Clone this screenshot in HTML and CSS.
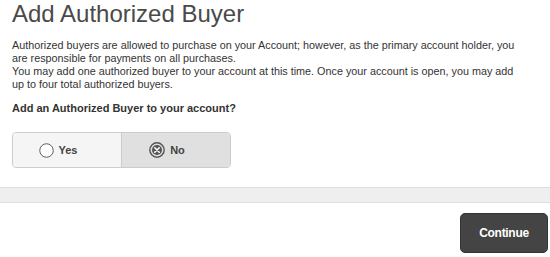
FILE: index.html
```html
<!DOCTYPE html>
<html lang="en">
<head>
    <meta charset="UTF-8">
    <meta name="viewport" content="width=device-width, initial-scale=1.0">
    <title>Add Authorized Buyer</title>
    <link rel="stylesheet" href="styles.css">
</head>
<body>
    <div class="content">
        <h1>Add Authorized Buyer</h1>
        <p class="intro">Authorized buyers are allowed to purchase on your Account; however, as the primary account holder, you are responsible for payments on all purchases.<br>
        You may add one authorized buyer to your account at this time. Once your account is open, you may add up to four total authorized buyers.</p>
        <p class="question">Add an Authorized Buyer to your account?</p>
        <div class="toggle">
            <label class="option">
                <svg width="15" height="15" viewBox="0 0 16 16">
                    <circle cx="8" cy="8" r="7.2" fill="#fff" stroke="#555" stroke-width="1"/>
                </svg>
                Yes
            </label>
            <label class="option selected">
                <svg width="16" height="16" viewBox="0 0 16 16">
                    <circle cx="8" cy="8" r="7.2" fill="#ddd" stroke="#555" stroke-width="1.4"/>
                    <circle cx="8" cy="8" r="5" fill="#555"/>
                    <path d="M5.8 5.8 L10.2 10.2 M10.2 5.8 L5.8 10.2" stroke="#fff" stroke-width="1.6" stroke-linecap="round"/>
                </svg>
                No
            </label>
        </div>
    </div>
    <div class="band"></div>
    <div class="actions">
        <button class="continue">Continue</button>
    </div>
</body>
</html>
```

FILE: styles.css
```css
body {
    font-family: "Liberation Sans", Arial, sans-serif;
    margin: 0;
    padding: 0;
    background: #fff;
    color: #333;
}
.content {
    padding: 0 12px;
}
h1 {
    font-size: 24px;
    font-weight: normal;
    color: #4a4a4a;
    margin: 0;
    line-height: 28px;
}
.intro {
    max-width: 510px;
    font-size: 10.8px;
    line-height: 13px;
    margin: 11px 0 0;
}
.question {
    font-size: 11px;
    font-weight: bold;
    line-height: 13px;
    margin: 11px 0 0;
}
.toggle {
    display: flex;
    width: 217px;
    height: 34px;
    margin-top: 17px;
    border: 1px solid #ccc;
    border-radius: 4px;
    overflow: hidden;
}
.option {
    flex: 1;
    display: flex;
    align-items: center;
    justify-content: center;
    gap: 5px;
    padding-right: 18px;
    font-size: 11px;
    font-weight: bold;
    color: #444;
    background: #f5f5f5;
}
.option.selected {
    background: #e0e0e0;
    border-left: 1px solid #ccc;
}
.band {
    margin-top: 19px;
    height: 14px;
    background: #efefef;
    border-top: 1px solid #ddd;
    border-bottom: 1px solid #ddd;
}
.actions {
    display: flex;
    justify-content: flex-end;
    padding: 10px 2px 0 0;
}
.continue {
    width: 88px;
    height: 40px;
    background: #444;
    color: #fff;
    border: 1px solid #333;
    border-radius: 5px;
    font-family: "Liberation Sans", Arial, sans-serif;
    font-size: 12px;
    font-weight: bold;
    letter-spacing: -0.3px;
    cursor: pointer;
}
```
